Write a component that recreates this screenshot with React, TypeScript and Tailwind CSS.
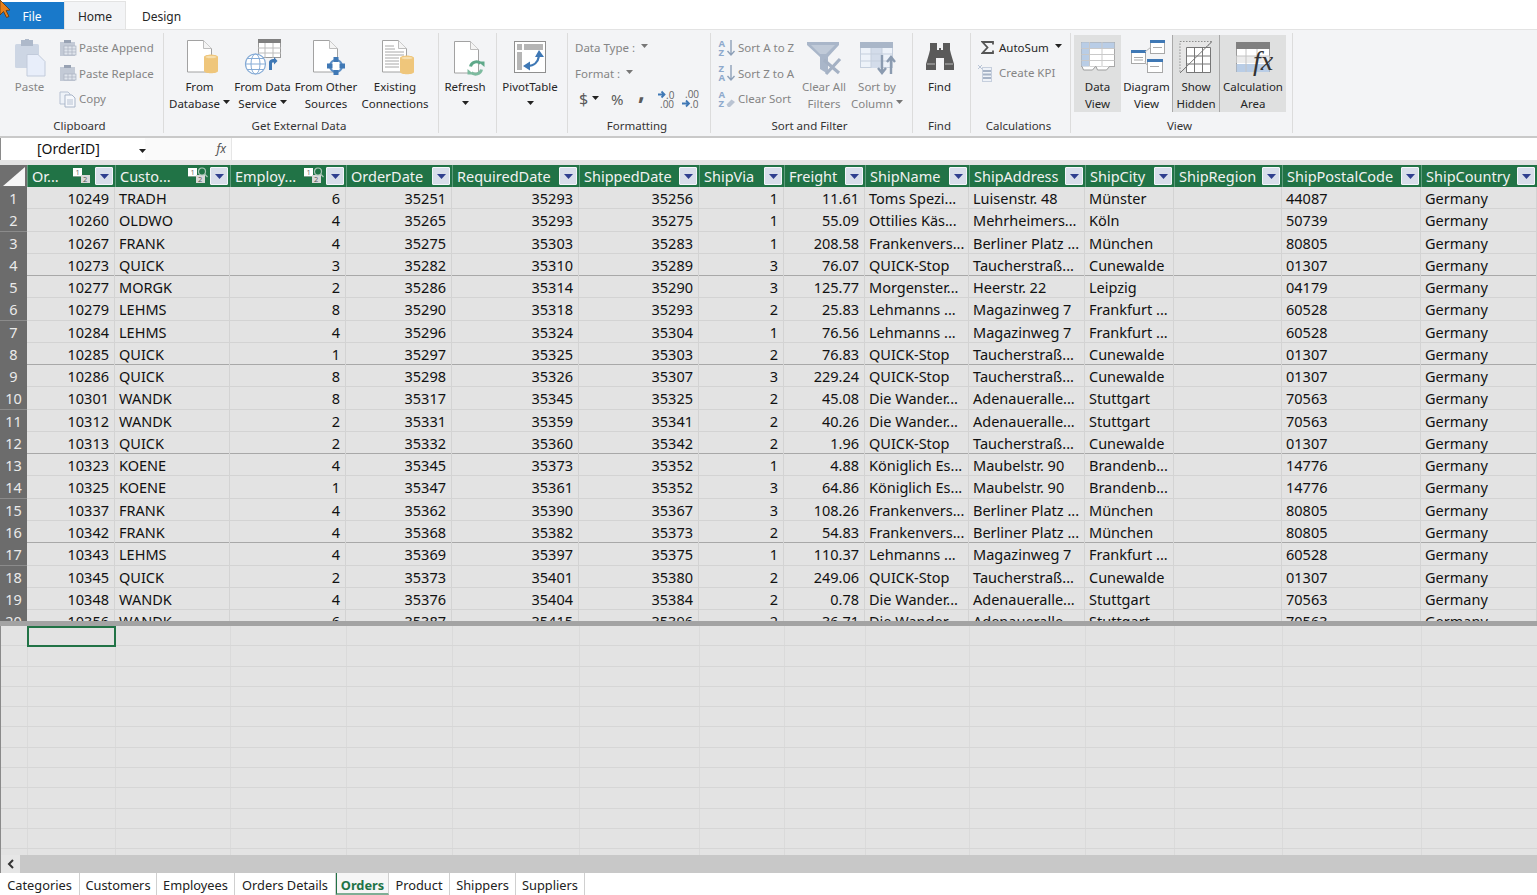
import type { ReactNode } from "react";

const rows = [
  ["10249", "TRADH", "6", "35251", "35293", "35256", "1", "11.61", "Toms Spezi...", "Luisenstr. 48", "Münster", "44087"],
  ["10260", "OLDWO", "4", "35265", "35293", "35275", "1", "55.09", "Ottilies Käs...", "Mehrheimers...", "Köln", "50739"],
  ["10267", "FRANK", "4", "35275", "35303", "35283", "1", "208.58", "Frankenvers...", "Berliner Platz ...", "München", "80805"],
  ["10273", "QUICK", "3", "35282", "35310", "35289", "3", "76.07", "QUICK-Stop", "Taucherstraß...", "Cunewalde", "01307"],
  ["10277", "MORGK", "2", "35286", "35314", "35290", "3", "125.77", "Morgenster...", "Heerstr. 22", "Leipzig", "04179"],
  ["10279", "LEHMS", "8", "35290", "35318", "35293", "2", "25.83", "Lehmanns ...", "Magazinweg 7", "Frankfurt ...", "60528"],
  ["10284", "LEHMS", "4", "35296", "35324", "35304", "1", "76.56", "Lehmanns ...", "Magazinweg 7", "Frankfurt ...", "60528"],
  ["10285", "QUICK", "1", "35297", "35325", "35303", "2", "76.83", "QUICK-Stop", "Taucherstraß...", "Cunewalde", "01307"],
  ["10286", "QUICK", "8", "35298", "35326", "35307", "3", "229.24", "QUICK-Stop", "Taucherstraß...", "Cunewalde", "01307"],
  ["10301", "WANDK", "8", "35317", "35345", "35325", "2", "45.08", "Die Wander...", "Adenaueralle...", "Stuttgart", "70563"],
  ["10312", "WANDK", "2", "35331", "35359", "35341", "2", "40.26", "Die Wander...", "Adenaueralle...", "Stuttgart", "70563"],
  ["10313", "QUICK", "2", "35332", "35360", "35342", "2", "1.96", "QUICK-Stop", "Taucherstraß...", "Cunewalde", "01307"],
  ["10323", "KOENE", "4", "35345", "35373", "35352", "1", "4.88", "Königlich Es...", "Maubelstr. 90", "Brandenb...", "14776"],
  ["10325", "KOENE", "1", "35347", "35361", "35352", "3", "64.86", "Königlich Es...", "Maubelstr. 90", "Brandenb...", "14776"],
  ["10337", "FRANK", "4", "35362", "35390", "35367", "3", "108.26", "Frankenvers...", "Berliner Platz ...", "München", "80805"],
  ["10342", "FRANK", "4", "35368", "35382", "35373", "2", "54.83", "Frankenvers...", "Berliner Platz ...", "München", "80805"],
  ["10343", "LEHMS", "4", "35369", "35397", "35375", "1", "110.37", "Lehmanns ...", "Magazinweg 7", "Frankfurt ...", "60528"],
  ["10345", "QUICK", "2", "35373", "35401", "35380", "2", "249.06", "QUICK-Stop", "Taucherstraß...", "Cunewalde", "01307"],
  ["10348", "WANDK", "4", "35376", "35404", "35384", "2", "0.78", "Die Wander...", "Adenaueralle...", "Stuttgart", "70563"],
  ["10356", "WANDK", "6", "35387", "35415", "35396", "2", "36.71", "Die Wander...", "Adenaueralle...", "Stuttgart", "70563"],
];

const columns = [
  { name: "Or...", key: "sort" },
  { name: "Custo...", key: "find" },
  { name: "Employ...", key: "find" },
  { name: "OrderDate" },
  { name: "RequiredDate" },
  { name: "ShippedDate" },
  { name: "ShipVia" },
  { name: "Freight" },
  { name: "ShipName" },
  { name: "ShipAddress" },
  { name: "ShipCity" },
  { name: "ShipRegion" },
  { name: "ShipPostalCode" },
  { name: "ShipCountry" },
];

const gridCols =
  "grid grid-cols-[27px_88px_115px_116px_106px_127px_120px_85px_81px_104px_116px_89px_108px_139px_116px]";

const tabs = [
  { name: "Categories", w: "w-[80px]" },
  { name: "Customers", w: "w-[77px]" },
  { name: "Employees", w: "w-[78px]" },
  { name: "Orders Details", w: "w-[101px]" },
  { name: "Orders", w: "w-[53px]", active: true },
  { name: "Product", w: "w-[61px]" },
  { name: "Shippers", w: "w-[66px]" },
  { name: "Suppliers", w: "w-[69px]" },
];

const Caret = ({ muted }: { muted?: boolean }) => (
  <svg width="7" height="4" viewBox="0 0 7 4" className="inline-block">
    <path d="M0 0h7L3.5 4z" fill={muted ? "#777" : "#222"} />
  </svg>
);

const Page = ({ x = 9, y = 3 }: { x?: number; y?: number }) => (
  <g transform={`translate(${x} ${y})`}>
    <path d="M.5.5h16l8 8v23.500h-24z" fill="#fff" stroke="#a2a2a2" />
    <path d="M16.500.5v8h8" fill="#f4f4f4" stroke="#bdbdbd" />
  </g>
);

const Cylinder = ({ x = 26, y = 17 }: { x?: number; y?: number }) => (
  <g transform={`translate(${x} ${y})`}>
    <path d="M0 3C0 0 14 0 14 3V17C14 20 0 20 0 17z" fill="#efc67b" />
    <ellipse cx="7" cy="3" rx="6" ry="1.800" fill="#f7dfae" stroke="#efc67b" />
  </g>
);

const Icon = ({ children }: { children: ReactNode }) => (
  <svg width="44" height="40" viewBox="0 0 44 40" className="overflow-visible">
    {children}
  </svg>
);

const Big = ({
  w,
  icon,
  lines,
  caret,
  muted,
  active,
}: {
  w: string;
  icon: ReactNode;
  lines: string[];
  caret?: boolean;
  muted?: boolean;
  active?: boolean;
}) => (
  <div
    className={`${w} h-[77px] flex flex-col items-center shrink-0 ${active ? "bg-[#dfe0e0]" : ""} ${
      muted ? "text-[#858585]" : "text-[#262626]"
    }`}
  >
    <div className="h-[44px] pt-[2px] shrink-0">{icon}</div>
    {lines.map((l, i) => (
      <div key={l} className="h-[16.5px] leading-[16.5px] whitespace-nowrap">
        {l}
        {caret && i === lines.length - 1 && lines.length > 1 ? (
          <span className="ml-[3px] relative top-[-2px]">
            <Caret muted={muted} />
          </span>
        ) : null}
      </div>
    ))}
    {caret && lines.length === 1 ? (
      <div className="h-[16.5px] leading-[14px]">
        <Caret />
      </div>
    ) : null}
  </div>
);

const Small = ({ icon, label }: { icon: ReactNode; label: string }) => (
  <div className="h-[25.5px] flex items-center whitespace-nowrap text-[#858585]">
    <span className="w-[20px] h-[18px] flex items-center shrink-0">{icon}</span>
    {label}
  </div>
);

const PasteSmall = ({ rows: r }: { rows: number }) => (
  <svg width="18" height="18" viewBox="0 0 18 18">
    <rect x="1" y="3" width="15" height="14" fill="#c3cad6" />
    <rect x="5" y="1" width="7" height="3" fill="#98a2b3" />
    <rect x="5" y={r === 2 ? 7 : 10} width="12" height={r === 2 ? 9 : 6} fill="#dfe4ec" stroke="#a9b2c0" strokeWidth=".7" />
    <path d={r === 2 ? "M5 10h12M5 13h12M9 7v9M13 7v9" : "M5 13h12M9 10v6M13 10v6"} stroke="#a9b2c0" strokeWidth=".7" />
  </svg>
);

const SortIcon = ({ top, bottom, eraser }: { top: string; bottom: string; eraser?: boolean }) => (
  <svg width="18" height="20" viewBox="0 0 18 20">
    <text x="0.5" y="8.500" fontSize="9.500" fontWeight="700" fill="#8ea9cc" fontFamily="Open Sans, sans-serif">{top}</text>
    <text x="0.5" y="18" fontSize="9.500" fontWeight="700" fill="#8ea9cc" fontFamily="Open Sans, sans-serif">{bottom}</text>
    {eraser ? (
      <path d="M8.500 15.500l5-5 3.500 2.500-5 5h-2z" fill="#b9c3d2" />
    ) : (
      <path d="M13 2v15M9.500 13l3.500 4 3.500-4" fill="none" stroke="#8ea0b8" strokeWidth="1.400" />
    )}
  </svg>
);

const Group = ({ w, label, children }: { w: string; label?: string; children: ReactNode }) => (
  <div className={`${w} h-full relative shrink-0`}>
    <div className="flex pt-[5px] h-[82px]">{children}</div>
    {label ? (
      <div className="absolute left-0 right-[5px] top-[88px] text-center text-[#333] leading-[16px]">{label}</div>
    ) : null}
    <div className="absolute right-0 top-[3px] h-[100px] w-[1px] bg-[#dcdcdc]" />
  </div>
);

const Ribbon = () => (
  <div className="h-[109px] bg-[#f3f4f6] border-b-[2px] border-[#c9c9c9] border-t border-t-[#e3e3e3] flex text-[11.5px]">
    <Group w="w-[164px]" label="Clipboard">
      <Big
        w="w-[59px]"
        muted
        lines={["Paste"]}
        icon={
          <Icon>
            <rect x="7" y="7" width="24" height="24" rx="1.5" fill="#cdd6e4" />
            <rect x="13" y="3" width="12" height="6" fill="#aeb9ca" />
            <rect x="17" y="2" width="4" height="3" fill="#aeb9ca" />
            <path d="M19 17.5h11l7 7v14.5h-18z" fill="#e8eefa" stroke="#c2cbdb" />
          </Icon>
        }
      />
      <div>
        <Small label="Paste Append" icon={<PasteSmall rows={2} />} />
        <Small label="Paste Replace" icon={<PasteSmall rows={1} />} />
        <Small
          label="Copy"
          icon={
            <svg width="18" height="18" viewBox="0 0 18 18">
              <path d="M1 2h8l2 2v10H1z" fill="#eef2f8" stroke="#b6c1d2" />
              <path d="M6 5h7l3 3v9H6z" fill="#f6f8fc" stroke="#a9b5c8" />
              <path d="M8 10h6M8 12h6M8 14h6" stroke="#b6c1d2" />
            </svg>
          }
        />
      </div>
    </Group>
    <Group w="w-[275px]" label="Get External Data">
      <Big
        w="w-[63px] ml-[4px]"
        lines={["From", "Database"]}
        caret
        icon={
          <Icon>
            <Page />
            <Cylinder />
          </Icon>
        }
      />
      <Big
        w="w-[63px]"
        lines={["From Data", "Service"]}
        caret
        icon={
          <Icon>
            <rect x="17.500" y="2.500" width="22" height="18" fill="#fff" stroke="#999" />
            <rect x="17" y="2" width="23" height="4" fill="#808080" />
            <path d="M17 11h23M17 16h23M24 6v15M32 6v15" stroke="#bcbcbc" />
            <circle cx="14.500" cy="27" r="10" fill="#fff" stroke="#85abd6" strokeWidth="1.200" />
            <ellipse cx="14.500" cy="27" rx="4.500" ry="10" fill="none" stroke="#85abd6" />
            <path d="M4.500 27h20M6 21.500h17M6 32.500h17" stroke="#85abd6" />
            <path d="M28 33h3v-6.500c0-.5 0-1 1-1h1v2l3.500-3.500-3.500-4v2c-3 0-5 1-5 4z" fill="#3f78b5" />
          </Icon>
        }
      />
      <Big
        w="w-[64px]"
        lines={["From Other", "Sources"]}
        icon={
          <Icon>
            <Page />
            <circle cx="32" cy="29" r="6" fill="#fff" stroke="#5e90c6" strokeWidth="2" />
            <rect x="29.500" y="20" width="5" height="5" fill="#3f78b5" />
            <rect x="29.500" y="33" width="5" height="5" fill="#3f78b5" />
            <rect x="23" y="26.500" width="5.500" height="5" fill="#3f78b5" />
            <rect x="35.500" y="26.500" width="5.500" height="5" fill="#3f78b5" />
          </Icon>
        }
      />
      <Big
        w="w-[74px]"
        lines={["Existing", "Connections"]}
        icon={
          <Icon>
            <Page />
            <path d="M12 9h9M12 12h10M12 15h19M12 18h19M12 21h14M12 24h14M12 27h14M12 30h14" stroke="#a8a8a8" />
            <Cylinder x={27} y={18} />
          </Icon>
        }
      />
    </Group>
    <Group w="w-[58px]">
      <Big
        w="w-[52px]"
        lines={["Refresh"]}
        caret
        icon={
          <Icon>
            <Page x={11} y={4} />
            <path d="M27.500 29.500a6 6 0 0 1 10-3" fill="none" stroke="#5fa98a" strokeWidth="3" />
            <path d="M35 24.500h6.500V30z" fill="#5fa98a" />
            <path d="M38.500 32.500a6 6 0 0 1-10 3" fill="none" stroke="#7dbb9f" strokeWidth="3" />
            <path d="M31 37.500h-6.500V32z" fill="#7dbb9f" />
          </Icon>
        }
      />
    </Group>
    <Group w="w-[71px]">
      <Big
        w="w-[66px]"
        lines={["PivotTable"]}
        caret
        icon={
          <Icon>
            <rect x="6.500" y="4.500" width="31" height="31" fill="#fff" stroke="#8f8f8f" />
            <rect x="9" y="7" width="5" height="6" fill="#b5b5b5" />
            <rect x="16" y="7" width="19" height="6" fill="#b5b5b5" />
            <rect x="9" y="15" width="5" height="18" fill="#b5b5b5" />
            <path d="M20 29c6 0 10-4 11-10" fill="none" stroke="#3f78b5" strokeWidth="2.200" />
            <path d="M31 13l5 7h-9zM15 29l7-4.500v9z" fill="#3f78b5" />
          </Icon>
        }
      />
    </Group>
    <Group w="w-[143px]" label="Formatting">
      <div className="pl-[7px] text-[#858585]">
        <div className="h-[25.5px] flex items-center">
          Data Type :
          <span className="ml-[6px] relative top-[-3px]">
            <Caret muted />
          </span>
        </div>
        <div className="h-[25.5px] flex items-center">
          Format :
          <span className="ml-[6px] relative top-[-3px]">
            <Caret muted />
          </span>
        </div>
        <div className="h-[25.5px] flex items-center text-[#5a5a5a] w-[132px]">
          <span className="text-[16px] ml-[4px] w-[9px]">$</span>
          <span className="ml-[4px] relative top-[-2px]">
            <Caret />
          </span>
          <span className="text-[15px] ml-[12px] w-[14px]">%</span>
          <span className="text-[24px] font-bold ml-[13px] w-[7px] relative top-[-8px] leading-none font-['Liberation_Serif',serif]">,</span>
          <svg width="20" height="20" viewBox="0 0 20 20" className="ml-[12px]">
            <path d="M1 5.500h6M4.500 2.500L7.500 5.500 4.500 8.500" stroke="#3f78b5" strokeWidth="1.800" fill="none" />
            <text x="9" y="10" fontSize="10" fill="#666" fontFamily="Open Sans, sans-serif">.0</text>
            <text x="3" y="19" fontSize="10" fill="#666" fontFamily="Open Sans, sans-serif">.00</text>
          </svg>
          <svg width="20" height="20" viewBox="0 0 20 20" className="ml-[4px]">
            <text x="4" y="9" fontSize="10" fill="#666" fontFamily="Open Sans, sans-serif">.00</text>
            <path d="M1 14.500h7M5 11.500L8 14.500 5 17.500" stroke="#3f78b5" strokeWidth="1.800" fill="none" />
            <text x="9" y="19" fontSize="10" fill="#666" fontFamily="Open Sans, sans-serif">.0</text>
          </svg>
        </div>
      </div>
    </Group>
    <Group w="w-[202px]" label="Sort and Filter">
      <div className="pl-[7px] w-[87px] shrink-0">
        <Small label="Sort A to Z" icon={<SortIcon top="A" bottom="Z" />} />
        <Small label="Sort Z to A" icon={<SortIcon top="Z" bottom="A" />} />
        <Small label="Clear Sort" icon={<SortIcon top="A" bottom="Z" eraser />} />
      </div>
      <Big
        w="w-[52px]"
        muted
        lines={["Clear All", "Filters"]}
        icon={
          <Icon>
            <path d="M5 5h32v3L26 20v17l-8-5V20L5 8z" fill="#a9b6c9" />
            <path d="M9 8h24L24 17h-6z" fill="#c0cad8" />
            <path d="M22 23l15 13M38 22L24 37" stroke="#a4b1c4" strokeWidth="3.200" />
          </Icon>
        }
      />
      <Big
        w="w-[54px]"
        muted
        lines={["Sort by", "Column"]}
        caret
        icon={
          <Icon>
            <rect x="5.500" y="5.500" width="32" height="25" fill="#edf2f9" stroke="#c5cfdd" />
            <rect x="5" y="5" width="33" height="6" fill="#a9b6c8" />
            <rect x="16" y="11" width="11" height="20" fill="#d3dcea" />
            <path d="M5 17h33M5 24h33M16 11v20M27 11v20" stroke="#c5cfdd" />
            <path d="M27 18v18M23 31l4 5 4-5" fill="none" stroke="#8b9bb0" strokeWidth="2.400" />
            <path d="M36 37V20M32 25l4-5 4 5" fill="none" stroke="#8b9bb0" strokeWidth="2.400" />
          </Icon>
        }
      />
    </Group>
    <Group w="w-[58px]" label="Find">
      <Big
        w="w-[53px]"
        lines={["Find"]}
        icon={
          <Icon>
            <path d="M12 6h7v7h2v-2h2v2h2V6h7v7l1 4 3 10v6H26V21h-8v12H8v-6l3-10 1-4z" fill="#5a5a5a" />
            <rect x="9" y="26" width="8" height="2" fill="#8a8a8a" />
            <rect x="27" y="26" width="8" height="2" fill="#8a8a8a" />
          </Icon>
        }
      />
    </Group>
    <Group w="w-[100px]" label="Calculations">
      <div className="pl-[6px]">
        <div className="h-[25px] flex items-center text-[#262626]">
          <span className="w-[22px] shrink-0 pl-[4px]">
            <svg width="13" height="13" viewBox="0 0 13 13">
              <path d="M12 3.500V1H1.500l5 5.500-5 5.500H12V9.500" fill="none" stroke="#555" strokeWidth="1.800" />
            </svg>
          </span>
          AutoSum
          <span className="ml-[6px] relative top-[-3px]">
            <Caret />
          </span>
        </div>
        <div className="h-[25px] flex items-center text-[#858585]">
          <svg width="18" height="18" viewBox="0 0 18 18" className="shrink-0 mr-[4px]">
            <path d="M1 1l2 2 2-2M1 5l2-2 2 2" stroke="#b8c4d6" fill="none" />
            <rect x="5.500" y="3.500" width="9" height="14" fill="#eef2f8" stroke="#c6cfdd" />
            <path d="M6 7h8M6 10.500h8M6 14h8" stroke="#a6b3c6" strokeWidth="1.800" />
          </svg>
          Create KPI
        </div>
      </div>
    </Group>
    <Group w="w-[222px]" label="View">
      <div className="w-[3px] shrink-0" />
      <Big
        w="w-[47px]"
        active
        lines={["Data", "View"]}
        icon={
          <Icon>
            <rect x="5.500" y="5.500" width="33" height="24" fill="#fff" stroke="#a8a8a8" />
            <rect x="5.500" y="5.500" width="33" height="6" fill="#b9cde6" />
            <rect x="5.500" y="5.500" width="8" height="24" fill="#b9cde6" />
            <path d="M5.500 11.500h33M5.500 17.500h33M5.500 23.500h33M13.500 5v25M26 5v25" stroke="#c9c9c9" />
            <path d="M6 29.500l1.500 3.500h9l3-3.500M20 29.500l1.500 3.500h9l3-3.500" fill="#fff" stroke="#9c9c9c" />
          </Icon>
        }
      />
      <Big
        w="w-[51px]"
        lines={["Diagram", "View"]}
        icon={
          <Icon>
            <rect x="25.500" y="3.500" width="14" height="13" fill="#fff" stroke="#a8a8a8" />
            <rect x="25" y="3" width="15" height="3" fill="#3f78b5" />
            <path d="M28 10.500h9" stroke="#aaa" />
            <rect x="6.500" y="13.500" width="14" height="13" fill="#fff" stroke="#a8a8a8" />
            <rect x="6" y="13" width="15" height="3" fill="#3f78b5" />
            <path d="M9 20.500h9M9 23h9" stroke="#aaa" />
            <rect x="22.500" y="22.500" width="15" height="13" fill="#fff" stroke="#a8a8a8" />
            <rect x="22" y="22" width="16" height="3" fill="#3f78b5" />
            <path d="M25 29.500h9" stroke="#aaa" />
            <path d="M20 15l6-5M20 24c1 4 2 4 3 4" fill="none" stroke="#b5b5b5" />
          </Icon>
        }
      />
      <Big
        w="w-[48px] border-x border-[#a9a9a9]"
        active
        lines={["Show", "Hidden"]}
        icon={
          <Icon>
            <path d="M6 4.500h32L6 36z" fill="#e6e6e6" stroke="#8d8d8d" strokeDasharray="1.500 1.500" />
            <path d="M12.500 10.500h24v25h-24z" fill="#fff" stroke="#777" />
            <path d="M12.500 19h24M12.500 27h24M20.500 10.500v25M28.500 10.500v25" stroke="#777" />
            <path d="M38 4.500L6 36" stroke="#777" />
          </Icon>
        }
      />
      <Big
        w="w-[66px]"
        active
        lines={["Calculation", "Area"]}
        icon={
          <Icon>
            <rect x="5.500" y="5.500" width="33" height="29" fill="#fff" stroke="#999" />
            <rect x="5" y="5" width="34" height="7" fill="#808080" />
            <rect x="5.500" y="19" width="33" height="7" fill="#ececec" />
            <rect x="5.500" y="27" width="33" height="8" fill="#b9cde6" />
            <path d="M15 12v23M26 12v23M5.500 19h33" stroke="#c4c4c4" />
            <text x="22" y="33" fontSize="28" fontStyle="italic" fill="#333" fontFamily="Liberation Serif, serif">fx</text>
          </Icon>
        }
      />
    </Group>
  </div>
);

const KeyIcon = ({ find }: { find?: boolean }) => (
  <svg width="20" height="18" viewBox="0 0 20 18" className="shrink-0">
    <rect x="0" y="1" width="9" height="8" fill="#fff" />
    <rect x="8" y="8" width="9" height="8" fill="#d9d9d9" />
    <rect x="0" y="9" width="8" height="1" fill="#7f9f8e" />
    <text x="2.500" y="8" fontSize="7.500" fill="#666" fontFamily="Open Sans, sans-serif">1</text>
    <text x="10" y="15" fontSize="7.500" fill="#555" fontFamily="Open Sans, sans-serif">2</text>
    {find ? (
      <g fill="none" stroke="#a9c5b6" strokeWidth="1.200">
        <circle cx="14" cy="4.500" r="3.500" />
        <path d="M16.500 7l3 3" />
      </g>
    ) : null}
  </svg>
);

const HeaderCell = ({ name, keyIcon }: { name: string; keyIcon?: string }) => (
  <div className="h-[22px] flex items-center pl-[4px] pr-[2px] border-l border-[#5f9c7d] overflow-hidden">
    <span className="flex-1 whitespace-nowrap text-[#f2f2f2] relative top-[1px]">{name}</span>
    {keyIcon ? (
      <span className="mr-[2px]">
        <KeyIcon find={keyIcon === "find"} />
      </span>
    ) : null}
    <span className="w-[18px] h-[18px] shrink-0 flex items-center justify-center border border-[#f4f6fa] rounded-[1px] bg-[#d8deea]">
      <svg width="9" height="5" viewBox="0 0 9 5">
        <path d="M0 0h9L4.500 5z" fill="#2f3f8f" />
      </svg>
    </span>
  </div>
);

const DataRow = ({ r, i }: { r: string[]; i: number }) => {
  const line = (i + 1) % 4 === 0 ? "border-b-[#a8a8a8]" : "border-b-[#d3d3d3]";
  const num = "h-full text-right pr-[5px] border-r border-r-[#d3d3d3] whitespace-nowrap overflow-hidden";
  const txt = "h-full pl-[4px] border-r border-r-[#d3d3d3] whitespace-nowrap overflow-hidden";
  return (
    <div className={`${gridCols} h-[22.28px] leading-[22px] border-b ${line}`}>
      <div className="h-full bg-[#6c6c6c] text-[#eaeaea] text-center border-b border-b-[#8b8b8b]">{i + 1}</div>
      <div className={num}>{r[0]}</div>
      <div className={txt}>{r[1]}</div>
      <div className={num}>{r[2]}</div>
      <div className={num}>{r[3]}</div>
      <div className={num}>{r[4]}</div>
      <div className={num}>{r[5]}</div>
      <div className={num}>{r[6]}</div>
      <div className={num}>{r[7]}</div>
      <div className={txt}>{r[8]}</div>
      <div className={txt}>{r[9]}</div>
      <div className={txt}>{r[10]}</div>
      <div className={txt} />
      <div className={txt}>{r[11]}</div>
      <div className={txt}>Germany</div>
    </div>
  );
};

const Cursor = () => (
  <svg width="14" height="20" viewBox="0 0 14 20" className="absolute left-0 top-0">
    <path d="M0 0l10 10-4 .5 3 6-2.500 1-3-6L0 15z" fill="#e8801a" stroke="#5a3410" strokeWidth=".8" />
  </svg>
);

export default function App() {
  return (
    <div className="w-[1537px] h-[895px] relative overflow-hidden bg-[#e3e3e3] text-[#111] font-['Open_Sans',sans-serif]">
      {/* tabs */}
      <div className="h-[29px] bg-white flex items-end text-[12px] text-[#262626]">
        <div className="w-[64px] h-[27px] bg-[#1979ca] text-white flex items-center justify-center pt-[2px]">File</div>
        <div className="w-[62px] h-[28px] bg-[#f3f4f6] border-t border-x border-[#e3e3e3] flex items-center justify-center pt-[3px]">Home</div>
        <div className="w-[71px] h-[28px] flex items-center justify-center pt-[3px]">Design</div>
      </div>
      <Ribbon />

      {/* formula bar */}
      <div className="h-[22px] bg-white flex items-center text-[14px] border-l border-[#8a8a8a]">
        <div className="w-[144px] h-full relative pl-[36px] leading-[22px]">
          [OrderID]
          <span className="absolute left-[138px] top-[1px]">
            <Caret />
          </span>
        </div>
        <div className="w-[87px] h-full bg-[#fafafa] border-r border-[#e6e6e6] text-right pr-[5px] text-[12px] italic text-[#555] leading-[22px] font-['Liberation_Serif',serif]">
          fx
        </div>
      </div>
      <div className="h-[5px] bg-[#e3e3e3]" />

      {/* table */}
      <div className="text-[14.500px]">
        <div className={`${gridCols} h-[22px] bg-[#217346]`}>
          <div className="h-[22px] bg-[#6f6f6f] relative overflow-hidden">
            <svg width="27" height="22" viewBox="0 0 27 22" className="absolute left-0 top-0">
              <path d="M25 2v19H3z" fill="#f6f6f6" />
            </svg>
          </div>
          {columns.map((c) => (
            <HeaderCell key={c.name} name={c.name} keyIcon={c.key} />
          ))}
        </div>
        <div className="h-[434px] overflow-hidden">
          {rows.map((r, i) => (
            <DataRow key={r[0]} r={r} i={i} />
          ))}
        </div>
        <div className="h-[5px] bg-[#a3a3a3]" />
        {/* calculation area */}
        <div className="h-[229px] overflow-hidden relative border-l border-[#8a8a8a]">
          {Array.from({ length: 12 }).map((_, i) => (
            <div key={i} className={`${gridCols} h-[20.3px] border-b border-b-[#d6d6d6]`}>
              {columns.map((c) => (
                <div key={c.name} className="border-r border-r-[#dadada]" />
              ))}
            </div>
          ))}
          <div className="absolute left-[26px] top-0 w-[89px] h-[21px] border-2 border-[#217346]" />
        </div>
      </div>

      {/* scrollbar */}
      <div className="absolute left-0 top-[855px] w-full h-[18px] bg-[#c8c8c8] border-l border-[#8a8a8a]">
        <div className="w-[19px] h-full bg-[#e6e6e6] flex items-center justify-center">
          <svg width="8" height="10" viewBox="0 0 8 10">
            <path d="M6 1L2 5l4 4" fill="none" stroke="#333" strokeWidth="2" />
          </svg>
        </div>
      </div>

      {/* sheet tabs */}
      <div className="absolute left-0 top-[873px] w-full h-[22px] bg-white flex text-[12.800px] text-[#222] leading-[24px]">
        {tabs.map((t) => (
          <div
            key={t.name}
            className={`${t.w} h-full text-center border-r border-[#d0d0d0] whitespace-nowrap ${
              t.active ? "font-bold text-[#217346] border-l border-l-[#217346] border-b-2 border-b-[#7fae95] bg-[#f6f6f6]" : ""
            }`}
          >
            {t.name}
          </div>
        ))}
      </div>
      <Cursor />
    </div>
  );
}
